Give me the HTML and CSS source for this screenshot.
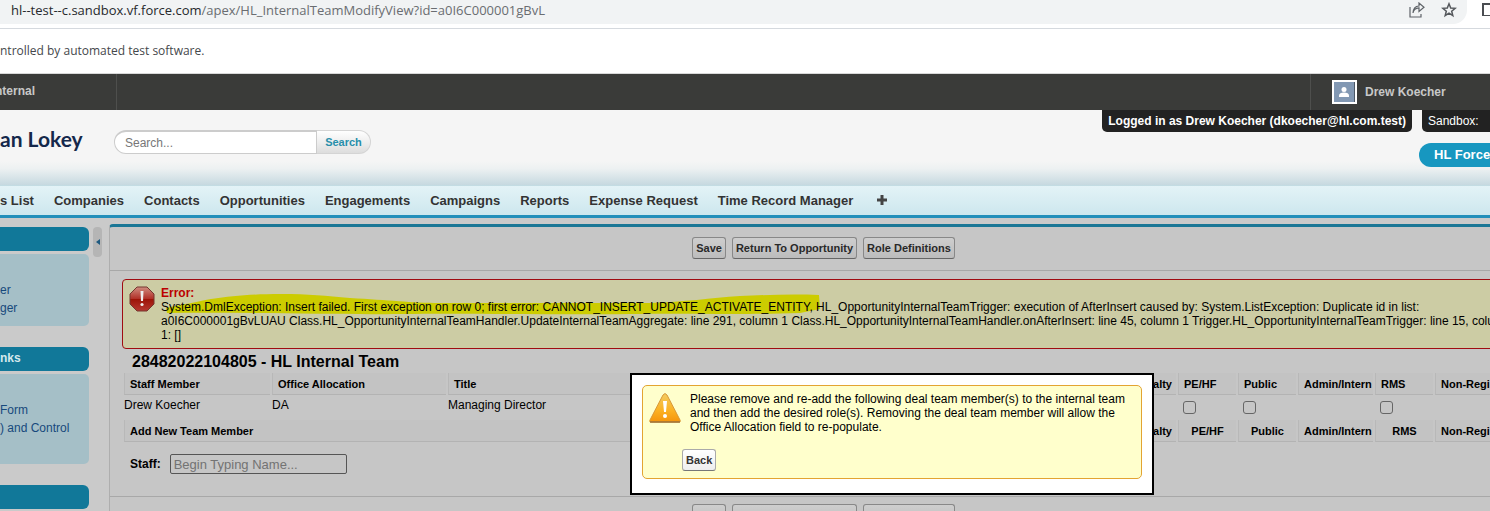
FILE: index.html
```html
<!DOCTYPE html>
<html lang="en">
<head>
<meta charset="utf-8">
<title>HL Internal Team</title>
<link rel="stylesheet" href="styles.css">
</head>
<body>
<div class="address-row">
  <div class="address-bar">
    <span class="url"><span class="host">hl--test--c.sandbox.vf.force.com</span>/apex/HL_InternalTeamModifyView?id=a0I6C000001gBvL</span>
    <svg class="share" width="16" height="16" viewBox="0 0 16 16" fill="none" stroke="#5f6368" stroke-width="1.2"><path d="M1 5v10h11v-3M4 11c.5-3.500 2.500-5 6-5.200V9.500L15 5.200 10 1v3C6.500 4.200 4.200 7 4 11z"/></svg>
    <svg class="star" width="16" height="16" viewBox="0 0 16 16" fill="none" stroke="#55585c" stroke-width="1.500"><path d="M8 1.800l1.700 4.200 4.500.3-3.500 2.900 1.100 4.400L8 11.200l-3.800 2.400 1.100-4.400-3.500-2.900 4.500-.3z"/></svg>
  </div>
  <svg width="9" height="16" viewBox="0 0 9 16" fill="none" stroke="#4a4d51" stroke-width="2"><path d="M9 4H2v12h7"/></svg>
</div>
<div class="infobar">ntrolled by automated test software.</div>
<div class="topbar">
  <div class="community">nternal</div>
  <div class="user">
    <svg width="25" height="24" viewBox="0 0 25 24"><path fill="#fff" d="M0 0h25v24H0z"/><path fill="#8298b3" d="M2 2h21v20H2z"/><path fill="#4c5866" d="M22 2h1v20h-1z"/><circle cx="12" cy="9.500" r="2.500" fill="#fff"/><path fill="#fff" d="M7 17v-1.500c0-2 2-3 5-3s5 1 5 3V17z"/></svg>
    <span>Drew Koecher</span>
  </div>
</div>
<header class="header">
  <div class="logo">an Lokey</div>
  <form class="search">
    <input type="text" aria-label="Search" placeholder="Search...">
    <button type="button">Search</button>
  </form>
  <div class="session">
    <div class="tags"><strong>Logged in as Drew Koecher (dkoecher@hl.com.test)</strong><span class="sandbox">Sandbox:</span></div>
    <button type="button" class="app-menu">HL Force</button>
  </div>
</header>
<nav class="tabs">
  <a href="#">s List</a><a href="#">Companies</a><a href="#">Contacts</a><a href="#">Opportunities</a><a href="#">Engagements</a><a href="#">Campaigns</a><a href="#">Reports</a><a href="#">Expense Request</a><a href="#">Time Record Manager</a>
  <a href="#" class="all-tabs" aria-label="All tabs"><svg width="10" height="10" viewBox="0 0 10 10"><path d="M3.500 0h3v3.500H10v3H6.500V10h-3V6.500H0v-3h3.500z" fill="#444"/></svg></a>
</nav>
<div class="page">
  <aside class="sidebar">
    <h2></h2>
    <div class="links recent"><a href="#">er</a><a href="#">ger</a></div>
    <h2>nks</h2>
    <div class="links custom"><a href="#">Form</a><a href="#">) and Control</a></div>
    <h2></h2>
  </aside>
  <button type="button" class="collapse" aria-label="Collapse sidebar"><svg width="4" height="6" viewBox="0 0 4 6"><path d="M4 0v6L0 3z" fill="#1f5a80"/></svg></button>
  <main class="main">
    <div class="actions"><button type="button">Save</button><button type="button">Return To Opportunity</button><button type="button">Role Definitions</button></div>
    <div class="body">
      <div class="error">
        <svg class="marker" width="670" height="30" viewBox="0 0 670 30"><path fill="#cccc00" d="M5 16C20 13 40 9 50 7 72 4 90 2 120 2c28 0 45 2 69 4 40 2 60 5 90 5h210c35-1 60-5 90-7 25-1 50-2 79-1l1 14-20 4c-70 2-110 0-170 1-90 1-150-1-230 0-60 1-150-2-233-1z"/></svg>
        <svg class="stop" width="26" height="26" viewBox="0 0 26 26"><defs><linearGradient id="r" x2="0" y2="1"><stop stop-color="#cf8c80"/><stop offset=".48" stop-color="#b23229"/><stop offset=".52" stop-color="#9d1408"/><stop offset="1" stop-color="#b63830"/></linearGradient></defs><path d="M8 1h10l7 7v10l-7 7H8l-7-7V8z" fill="url(#r)" stroke="#74372f"/><path d="M11.500 5h3L14 15h-2z" fill="#eee"/><circle cx="13" cy="18.500" r="1.600" fill="#eee"/></svg>
        <div class="message"><b>Error:</b><br>System.DmlException: Insert failed. First exception on row 0; first error: CANNOT_INSERT_UPDATE_ACTIVATE_ENTITY, HL_OpportunityInternalTeamTrigger: execution of AfterInsert caused by: System.ListException: Duplicate id in list:<br>a0I6C000001gBvLUAU Class.HL_OpportunityInternalTeamHandler.UpdateInternalTeamAggregate: line 291, column 1 Class.HL_OpportunityInternalTeamHandler.onAfterInsert: line 45, column 1 Trigger.HL_OpportunityInternalTeamTrigger: line 15, column<br>1: []</div>
      </div>
      <h1>28482022104805 - HL Internal Team</h1>
      <table class="team">
        <colgroup><col class="c-staff"><col class="c-office"><col class="c-title"><col class="c-gap"><col class="c-check"><col class="c-check"><col class="c-check"><col class="c-admin"><col class="c-check"><col></colgroup>
        <thead><tr><th>Staff Member</th><th>Office Allocation</th><th>Title</th><th></th><th class="end">Specialty</th><th>PE/HF</th><th>Public</th><th>Admin/Intern</th><th>RMS</th><th>Non-Registered</th></tr></thead>
        <tbody>
          <tr><td>Drew Koecher</td><td>DA</td><td>Managing Director</td><td></td><td></td><td><input type="checkbox" aria-label="PE/HF"></td><td><input type="checkbox" aria-label="Public"></td><td></td><td><input type="checkbox" aria-label="RMS"></td><td></td></tr>
          <tr><th colspan="4">Add New Team Member</th><th class="end">Specialty</th><th class="mid">PE/HF</th><th class="mid">Public</th><th>Admin/Intern</th><th class="mid">RMS</th><th>Non-Registered</th></tr>
        </tbody>
      </table>
      <div class="staff"><label for="staff">Staff:</label><input id="staff" type="text" placeholder="Begin Typing Name..."></div>
    </div>
    <div class="actions bottom"><button type="button">Save</button><button type="button">Return To Opportunity</button><button type="button">Role Definitions</button></div>
  </main>
</div>
<div class="dialog" role="dialog" aria-label="Warning">
  <div class="warning">
    <svg width="34" height="32" viewBox="0 0 34 32"><defs><linearGradient id="w" x2="0" y2="1"><stop stop-color="#f3cb61"/><stop offset=".6" stop-color="#fbb123"/><stop offset="1" stop-color="#f5950c"/></linearGradient></defs><path d="M3 30h28q2 0 1-2L19 3q-2-3-4 0L2 28q-1 2 1 2z" fill="url(#w)" stroke="#d89838"/><path d="M2 30h30" stroke="#9d7137" stroke-width="1.500"/><path d="M15 9h4l-1 11h-2z" fill="#fff"/><circle cx="17" cy="24" r="2" fill="#fff"/></svg>
    <div><p>Please remove and re-add the following deal team member(s) to the internal team and then add the desired role(s). Removing the deal team member will allow the Office Allocation field to re-populate.</p><button type="button">Back</button></div>
  </div>
</div>
</body>
</html>
```
FILE: styles.css
```css
* { box-sizing: border-box; }
html { height: 100%; }
body { margin: 0; height: 100%; display: flex; flex-direction: column; overflow: hidden; background: #cacaca; color: #000; font: 12px/14px Arial, "Liberation Sans", sans-serif; }
button, input { font: inherit; margin: 0; }
a { text-decoration: none; color: inherit; }
.address-row, .infobar, .topbar, .header, .tabs { flex: none; }
.address-row { height: 29px; display: flex; align-items: flex-start; justify-content: space-between; background: #fff; border-bottom: 1px solid #d5d9de; }
.address-bar { flex: 1; margin-right: 14px; height: 24px; display: flex; align-items: center; gap: 16px; padding: 0 10px 4px 11px; background: #f1f3f4; border-radius: 0 0 14px 0; }
.url { flex: 1; color: #6a6d71; font: 13px/18px "Open Sans", sans-serif; white-space: nowrap; }
.host { color: #27292c; }
.infobar { height: 45px; background: #fff; color: #45484c; border-bottom: 1px solid #d8d8d8; font: 12px/44px "Open Sans", sans-serif; }
.topbar { height: 36px; background: #3a3b39; display: flex; justify-content: space-between; color: #c8c8c8; font-weight: bold; line-height: 34px; }
.community { width: 117px; padding-right: 81px; display: flex; justify-content: flex-end; border-right: 1px solid #4e4f4d; }
.user { width: 180px; border-left: 1px solid #4e4f4d; padding-left: 21px; display: flex; align-items: center; gap: 8px; }
.header { height: 76px; display: flex; background: linear-gradient(#f5f5f5 68%, #edf1f2 78%, #c6d9e0); border-bottom: 1px solid #c3dce3; }
.logo { width: 114px; padding-top: 15px; color: #14284b; font: bold 21px/28px Lato, sans-serif; }
.search { display: flex; height: 24px; margin-top: 20px; }
.search input { width: 203px; border: 1px solid #ccc; border-top: 2px solid #ccc; border-radius: 12px 0 0 12px; background: #fff; padding: 0 10px; outline: 0; }
.search input::placeholder { color: #777; }
.search button { width: 54px; padding: 0; border: 1px solid #d4d4d4; border-left: 0; border-radius: 0 12px 12px 0; background: linear-gradient(#fff, #ddd); color: #288fab; font-size: 11px; font-weight: bold; }
.session { margin-left: auto; display: flex; flex-direction: column; align-items: flex-end; gap: 11px; }
.tags { display: flex; gap: 10px; color: #fff; line-height: 22px; }
.tags strong, .tags span { background: #222; padding: 0 6px; border-radius: 0 0 5px 5px; }
.tags .sandbox { width: 68px; border-radius: 0 0 0 5px; }
.app-menu { width: 71px; height: 24px; border: 0; border-radius: 12px 0 0 12px; background: #1797c0; color: #fff; padding: 0 0 0 15px; font-size: 13px; font-weight: bold; white-space: nowrap; text-align: left; }
.tabs { height: 32px; display: flex; gap: 20px; border-bottom: 3px solid #238fba; background: linear-gradient(#e3f3f7, #cde7ee); color: #333; font: bold 13px/29px Arial, "Liberation Sans", sans-serif; }
.all-tabs { margin-left: 4px; }
.page { flex: 1; display: flex; align-items: stretch; min-height: 0; overflow: hidden; }
.sidebar { flex: none; width: 89px; padding-top: 9px; }
.sidebar h2 { margin: 0 0 3px; height: 24px; background: #117899; color: #d5e8ed; border-radius: 0 6px 6px 0; font-size: 12px; line-height: 22px; }
.links { background: #a5bfc7; border-radius: 0 5px 5px 0; color: #17497c; line-height: 18px; margin-bottom: 21px; }
.links a { display: block; }
.recent { height: 72px; padding-top: 27px; }
.custom { height: 90px; padding-top: 27px; }
.collapse { flex: none; width: 9px; height: 30px; margin: 9px 7px 0 4px; border: 0; border-radius: 4px; padding: 0; background: #b5b5b5; display: flex; align-items: center; justify-content: center; }
.main { flex: 1; min-width: 0; margin: 6px -47px 0 0; border-left: 1px solid #aeaeae; border-top: 3px solid #1b7796; border-radius: 4px 0 0 0; background: #c6c6c6; }
.actions { display: flex; justify-content: center; gap: 6px; height: 44px; padding-top: 10px; border-bottom: 1px solid #a8a8a8; }
.actions button { height: 22px; border: 1px solid #888; border-bottom-color: #666; border-radius: 3px; background: linear-gradient(#cecece, #bcbcbc); color: #292929; padding: 0 3px; font-weight: bold; font-size: 11px; }
.actions.bottom { border-top: 1px solid #a8a8a8; border-bottom: 0; padding-top: 7px; }
.body { padding: 8px 12px 22px; }
.error { position: relative; height: 70px; border: 1px solid #a00c12; border-radius: 4px; background: #cccca4; padding: 6px; display: flex; gap: 6px; white-space: nowrap; }
.stop { flex: none; }
.message { position: relative; }
.message b { color: #b00; }
.marker { position: absolute; left: 38px; top: 12px; }
h1 { font-size: 16px; line-height: 18px; margin: 4px 0 2px 10px; }
.team { table-layout: fixed; width: 100%; border-collapse: separate; border-spacing: 2px 0; }
.team th { height: 22px; padding: 0 5px; text-align: left; font-size: 11px; background: #c3c3c3; border-left: 1px solid #b8b8b8; border-bottom: 1px solid #b3b3b3; white-space: nowrap; }
.team td { height: 25px; padding: 3px 0 0; vertical-align: top; white-space: nowrap; }
.team th.end { text-align: right; padding: 0 4px 0 0; }
.team th.mid { text-align: center; }
.team input { display: block; appearance: none; width: 13px; height: 13px; border: 1px solid #666; border-radius: 3px; margin: 3px 0 0 5px; }
.c-staff { width: 146px; }
.c-office { width: 174px; }
.c-title { width: 300px; }
.c-gap { width: 366px; }
.c-check { width: 58px; }
.c-admin { width: 75px; }
.staff { display: flex; align-items: center; gap: 9px; margin: 12px 0 0 8px; font-weight: bold; }
.staff input { width: 177px; height: 20px; border: 1px solid #555; border-radius: 2px; background: transparent; padding: 0 3px; font-size: 13px; font-weight: normal; }
.staff input::placeholder { color: #737373; }
.dialog { position: absolute; left: 630px; top: 373px; width: 524px; border: 2px solid #000; background: #fff; padding: 10px 10px 14px; }
.warning { border: 1px solid #e3a432; border-radius: 5px; background: #ffffcc; display: flex; padding: 6px 6px 7px 5px; }
.warning svg { flex: none; }
.warning p { margin: 0 0 15px; padding-left: 8px; }
.warning button { height: 22px; border: 1px solid #aaa; border-bottom-color: #777; border-radius: 3px; background: linear-gradient(#fff, #eee); color: #333; padding: 0 3px; font-size: 11px; font-weight: bold; }
```
